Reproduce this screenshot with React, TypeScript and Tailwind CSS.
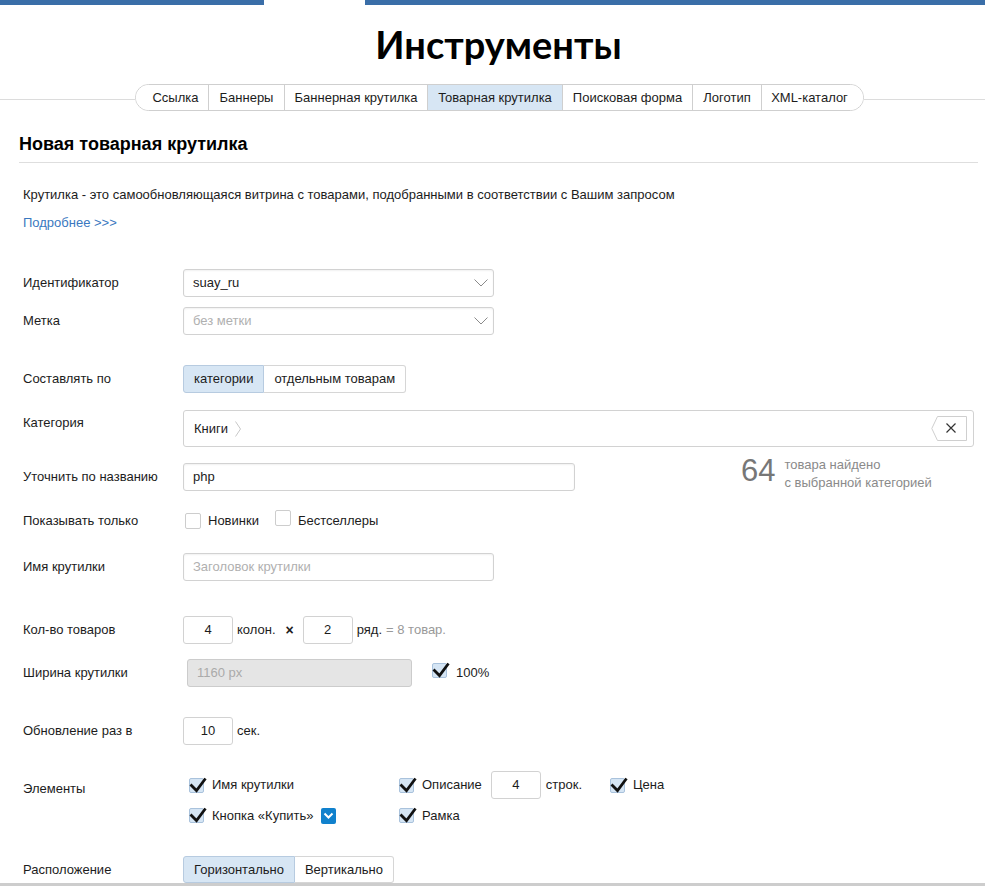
import React from "react";

function SelChevron() {
  return (
    <svg width="14" height="8" viewBox="0 0 14 8">
      <path d="M0.5 0.5 L7 7 L13.5 0.5" stroke="#8a8a8a" fill="none" strokeWidth="1" />
    </svg>
  );
}

function Select({ value, placeholder }: { value?: string; placeholder?: string }) {
  return (
    <div className="flex h-[28px] w-[311px] items-center justify-between rounded-[3px] border border-[#d2d2d2] bg-white pl-[9px] pr-[5px] shadow-[inset_0_1px_2px_rgba(0,0,0,0.06)]">
      {value ? <span className="text-[#222]">{value}</span> : <span className="text-[#b0b0b0]">{placeholder}</span>}
      <SelChevron />
    </div>
  );
}

function Box({ checked }: { checked?: boolean }) {
  if (checked) {
    return (
      <span className="relative inline-block h-[15px] w-[15px] shrink-0 rounded-[2px] border border-[#a9c2dc] bg-[#d5e5f4]">
        <svg className="absolute left-[-1px] top-[-1px] overflow-visible" width="17" height="15" viewBox="0 0 17 15">
          <path d="M1.5 6.5 L7.5 12.5 L16.5 0.5" stroke="#111" fill="none" strokeWidth="2.8" />
        </svg>
      </span>
    );
  }
  return <span className="inline-block h-4 w-4 shrink-0 rounded-[2px] border border-[#cdcdcd] bg-white" />;
}

function Row({
  label,
  children,
  className,
}: {
  label: string;
  children?: React.ReactNode;
  className?: string;
}) {
  return (
    <div className={"flex items-center " + (className ?? "")}>
      <div className="w-[160px] shrink-0">{label}</div>
      {children}
    </div>
  );
}

const tabs = [
  { t: "Ссылка", w: "w-[72px] pl-[7px]" },
  { t: "Баннеры", w: "w-[76px]" },
  { t: "Баннерная крутилка", w: "w-[143px]" },
  { t: "Товарная крутилка", w: "w-[135px]", active: true },
  { t: "Поисковая форма", w: "w-[130px]" },
  { t: "Логотип", w: "w-[69px]" },
  { t: "XML-каталог", w: "w-[102px] pr-[6px]" },
];

export default function App() {
  return (
    <div className="min-h-[886px] w-full bg-white font-['Liberation_Sans',Arial,sans-serif] text-[13px] text-[#1c1c1c]">
      {/* top bar */}
      <div className="flex h-[5px]">
        <div className="w-[264px] bg-[#3a6ea8]" />
        <div className="w-[101px]" />
        <div className="flex-1 bg-[#3a6ea8]" />
      </div>

      {/* title */}
      <div className="mt-[16px] pl-[12px] text-center font-['Lato',sans-serif] text-[38px] font-bold leading-[46px] text-black">
        Инструменты
      </div>

      {/* tabs */}
      <div className="mt-[17px] flex items-start">
        <div className="mt-[15px] h-px w-[135px] bg-[#dcdcdc]" />
        <div className="flex h-[27px] overflow-hidden rounded-full border border-[#cfcfcf]">
          {tabs.map((tb, i) => (
            <div
              key={tb.t}
              className={
                "flex items-center justify-center whitespace-nowrap " +
                tb.w +
                (i > 0 ? " border-l border-[#cfcfcf]" : "") +
                (tb.active ? " bg-[#d7e6f4]" : " bg-white")
              }
            >
              {tb.t}
            </div>
          ))}
        </div>
        <div className="mt-[15px] h-px flex-1 bg-[#dcdcdc]" />
      </div>

      {/* heading */}
      <div className="ml-[19px] mr-[7px] mt-[22px] border-b border-[#dedede] pb-[7px] text-[18px] font-bold leading-[22px] text-black">
        Новая товарная крутилка
      </div>

      <div className="pl-[23px]">
        <div className="mt-[23px] leading-[18px]">
          Крутилка - это самообновляющаяся витрина с товарами, подобранными в соответствии с Вашим запросом
        </div>
        <div className="mt-[10px] leading-[18px] text-[#3a78c0]">Подробнее &gt;&gt;&gt;</div>

        {/* Идентификатор */}
        <Row label="Идентификатор" className="mt-[37px]">
          <Select value="suay_ru" />
        </Row>
        <Row label="Метка" className="mt-[10px]">
          <Select placeholder="без метки" />
        </Row>

        <Row label="Составлять по" className="mt-[30px]">
          <div className="flex h-[28px]">
            <div className="flex items-center rounded-l-[3px] border border-[#b7cbe0] bg-[#d7e6f4] px-[10px]">категории</div>
            <div className="flex items-center rounded-r-[3px] border border-l-0 border-[#d6d6d6] bg-white px-[10px]">
              отдельным товарам
            </div>
          </div>
        </Row>

        {/* Категория */}
        <div className="mt-[17px] flex items-start">
          <div className="w-[160px] shrink-0 pt-[4px] leading-[18px]">Категория</div>
          <div className="flex h-[37px] w-[791px] items-center justify-between rounded-[3px] border border-[#d2d2d2] bg-white pl-[10px] pr-[6px]">
            <div className="flex items-center gap-[7px]">
              <span>Книги</span>
              <svg width="6" height="16" viewBox="0 0 6 16">
                <path d="M0.5 0.5 L5.5 8 L0.5 15.5" stroke="#c8c8c8" fill="none" strokeWidth="1" />
              </svg>
            </div>
            <svg width="36" height="25" viewBox="0 0 36 25">
              <polygon points="0.8,12.5 6.5,0.5 35.5,0.5 35.5,24.5 6.5,24.5" fill="white" stroke="#cfcfcf" strokeWidth="1" />
              <path d="M15.5 7.5 L24.5 16.5 M24.5 7.5 L15.5 16.5" stroke="#333" strokeWidth="1.2" />
            </svg>
          </div>
        </div>

        {/* Уточнить */}
        <div className="mt-[16px] flex h-[28px] items-start">
          <div className="flex h-[28px] w-[160px] shrink-0 items-center">Уточнить по названию</div>
          <div className="flex h-[28px] w-[392px] items-center rounded-[3px] border border-[#d2d2d2] bg-white pl-[9px] shadow-[inset_0_1px_2px_rgba(0,0,0,0.06)]">
            php
          </div>
          <div className="ml-[166px] mt-[-7px] flex items-start">
            <span className="text-[31px] leading-[30px] text-[#777]">64</span>
            <div className="ml-[9px] leading-[18px] text-[#8a8a8a]">
              <div>товара найдено</div>
              <div>с выбранной категорией</div>
            </div>
          </div>
        </div>

        <Row label="Показывать только" className="mt-[16px] h-[28px]">
          <div className="ml-[2px] flex items-center">
            <Box />
            <span className="ml-[7px]">Новинки</span>
            <span className="ml-[16px]">
              <Box />
            </span>
            <span className="ml-[7px]">Бестселлеры</span>
          </div>
        </Row>

        <Row label="Имя крутилки" className="mt-[18px]">
          <div className="flex h-[28px] w-[311px] items-center rounded-[3px] border border-[#d2d2d2] bg-white pl-[9px] text-[#b0b0b0] shadow-[inset_0_1px_2px_rgba(0,0,0,0.06)]">
            Заголовок крутилки
          </div>
        </Row>

        <Row label="Кол-во товаров" className="mt-[35px]">
          <div className="flex items-center">
            <div className="flex h-[28px] w-[50px] items-center justify-center rounded-[3px] border border-[#d2d2d2] bg-white">4</div>
            <span className="ml-[4px]">колон.</span>
            <span className="ml-[10px] text-[14px] font-semibold">×</span>
            <div className="ml-[9px] flex h-[28px] w-[50px] items-center justify-center rounded-[3px] border border-[#d2d2d2] bg-white">
              2
            </div>
            <span className="ml-[4px]">ряд.</span>
            <span className="ml-[4px] text-[#999]">= 8 товар.</span>
          </div>
        </Row>

        <Row label="Ширина крутилки" className="mt-[15px]">
          <div className="ml-[4px] flex items-center">
            <div className="flex h-[28px] w-[225px] items-center rounded-[3px] border border-[#cccccc] bg-[#e5e5e5] pl-[9px] text-[#aaa]">
              1160 px
            </div>
            <span className="ml-[20px]">
              <Box checked />
            </span>
            <span className="ml-[9px]">100%</span>
          </div>
        </Row>

        <Row label="Обновление раз в" className="mt-[30px]">
          <div className="flex items-center">
            <div className="flex h-[28px] w-[50px] items-center justify-center rounded-[3px] border border-[#d2d2d2] bg-white">10</div>
            <span className="ml-[4px]">сек.</span>
          </div>
        </Row>

        {/* Элементы */}
        <div className="mt-[26px] flex items-start">
          <div className="w-[160px] shrink-0 pt-[9px] leading-[18px]">Элементы</div>
          <div className="ml-[6px] flex flex-col">
            <div className="flex h-[28px] items-center">
              <div className="flex w-[210px] items-center">
                <Box checked />
                <span className="ml-[8px]">Имя крутилки</span>
              </div>
              <div className="flex w-[211px] items-center">
                <Box checked />
                <span className="ml-[8px]">Описание</span>
                <div className="ml-[9px] flex h-[28px] w-[50px] items-center justify-center rounded-[3px] border border-[#d2d2d2] bg-white">
                  4
                </div>
                <span className="ml-[5px]">строк.</span>
              </div>
              <div className="flex items-center">
                <Box checked />
                <span className="ml-[8px]">Цена</span>
              </div>
            </div>
            <div className="mt-[6px] flex h-[21px] items-center">
              <div className="flex w-[210px] items-center">
                <Box checked />
                <span className="ml-[8px]">Кнопка «Купить»</span>
                <span className="ml-[8px] flex h-4 w-[15px] items-center justify-center rounded-[2px] bg-[#1081cd]">
                  <svg width="11" height="8" viewBox="0 0 11 8">
                    <path d="M1.5 1.5 L5.5 5.5 L9.5 1.5" stroke="white" fill="none" strokeWidth="2" />
                  </svg>
                </span>
              </div>
              <div className="flex items-center">
                <Box checked />
                <span className="ml-[8px]">Рамка</span>
              </div>
            </div>
          </div>
        </div>

        <Row label="Расположение" className="mt-[30px]">
          <div className="flex h-[27px]">
            <div className="flex items-center rounded-l-[3px] border border-[#b7cbe0] bg-[#d7e6f4] px-[10px]">Горизонтально</div>
            <div className="flex items-center rounded-r-[3px] border border-l-0 border-[#d6d6d6] bg-white px-[10px]">Вертикально</div>
          </div>
        </Row>
      </div>
      <div className="h-[3px] w-full bg-[#cdcdcd]" />
    </div>
  );
}
